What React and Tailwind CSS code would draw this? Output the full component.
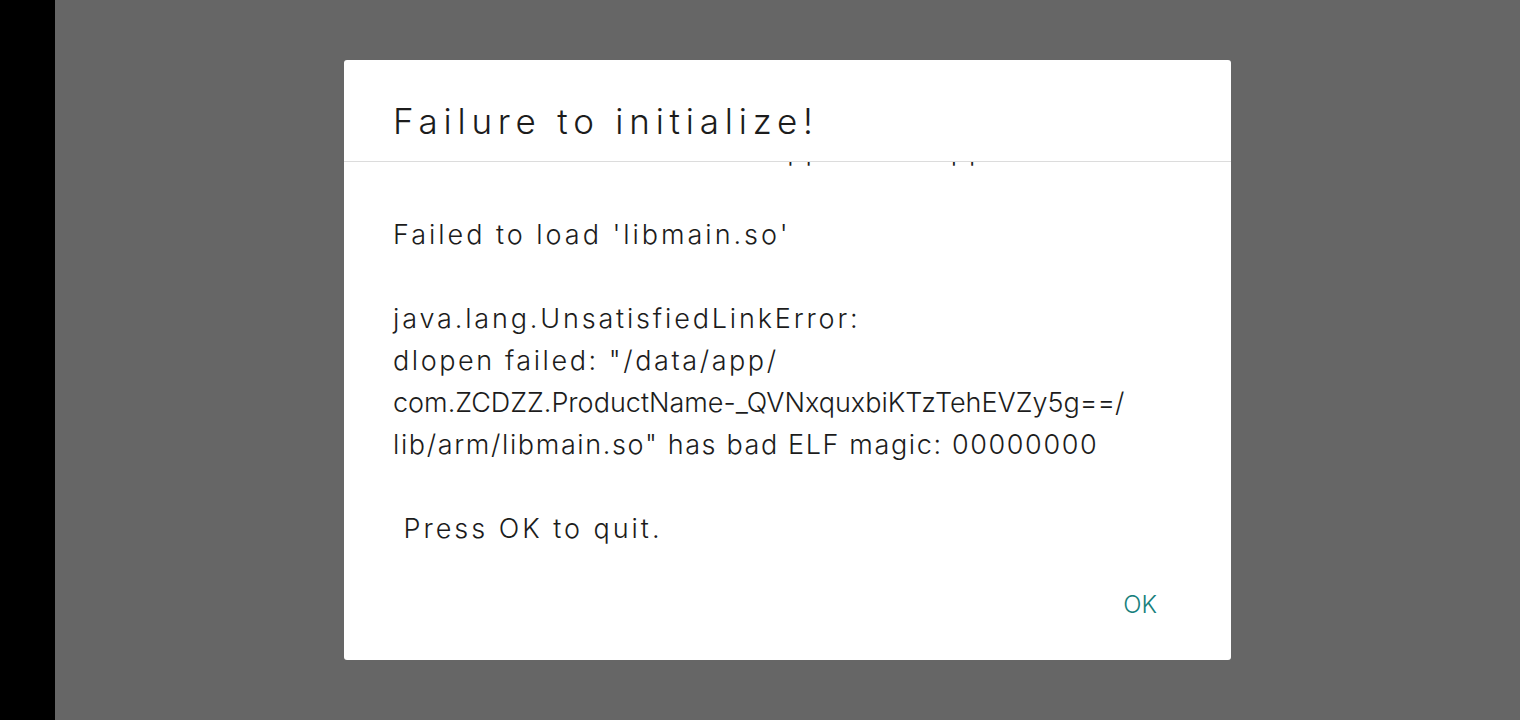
export default function App() {
  const font = { fontFamily: 'Inter, "Noto Sans", sans-serif' };
  return (
    <div className="flex h-[720px] w-full bg-black" style={font}>
      <div className="w-[55px] shrink-0 bg-black" />
      <div className="flex flex-1 items-start justify-center bg-[#666666] pt-[60px]">
        <div className="flex h-[600px] w-[887px] flex-col rounded-[3px] bg-white">
          {/* Title */}
          <div className="flex h-[101px] items-end pb-[22px] pl-[49px]">
            <h1 className="text-[35px] font-light leading-none tracking-[0.165em] text-[#1c1c1c]">
              Failure to initialize!
            </h1>
          </div>
          <div className="h-px bg-[#dcdcdc]" />

          {/* Message body, scrolled */}
          <div className="h-[399px] overflow-hidden">
            <div className="-mt-[32px] px-[49px] text-[27px] font-light leading-[42px] whitespace-pre text-[#1c1c1c]">
              <p className="tracking-[0.07em]">{' Your hardware does not support this application.'}</p>
              <p>&nbsp;</p>
              <p className="tracking-[0.11em]">Failed to load 'libmain.so'</p>
              <p>&nbsp;</p>
              <p className="tracking-[0.105em]">java.lang.UnsatisfiedLinkError:</p>
              <p className="tracking-[0.095em]">dlopen failed: "/data/app/</p>
              <p className="tracking-[0em]">com.ZCDZZ.ProductName-_QVNxquxbiKTzTehEVZy5g==/</p>
              <p className="tracking-[0.06em]">lib/arm/libmain.so" has bad ELF magic: 00000000</p>
              <p>&nbsp;</p>
              <p className="tracking-[0.11em]">{' Press OK to quit.'}</p>
            </div>
          </div>

          {/* Actions */}
          <div className="flex flex-1 items-start justify-end pt-[32px] pr-[74px]">
            <button className="text-[24px] font-light leading-6 text-[#17807c]">OK</button>
          </div>
        </div>
      </div>
    </div>
  );
}
